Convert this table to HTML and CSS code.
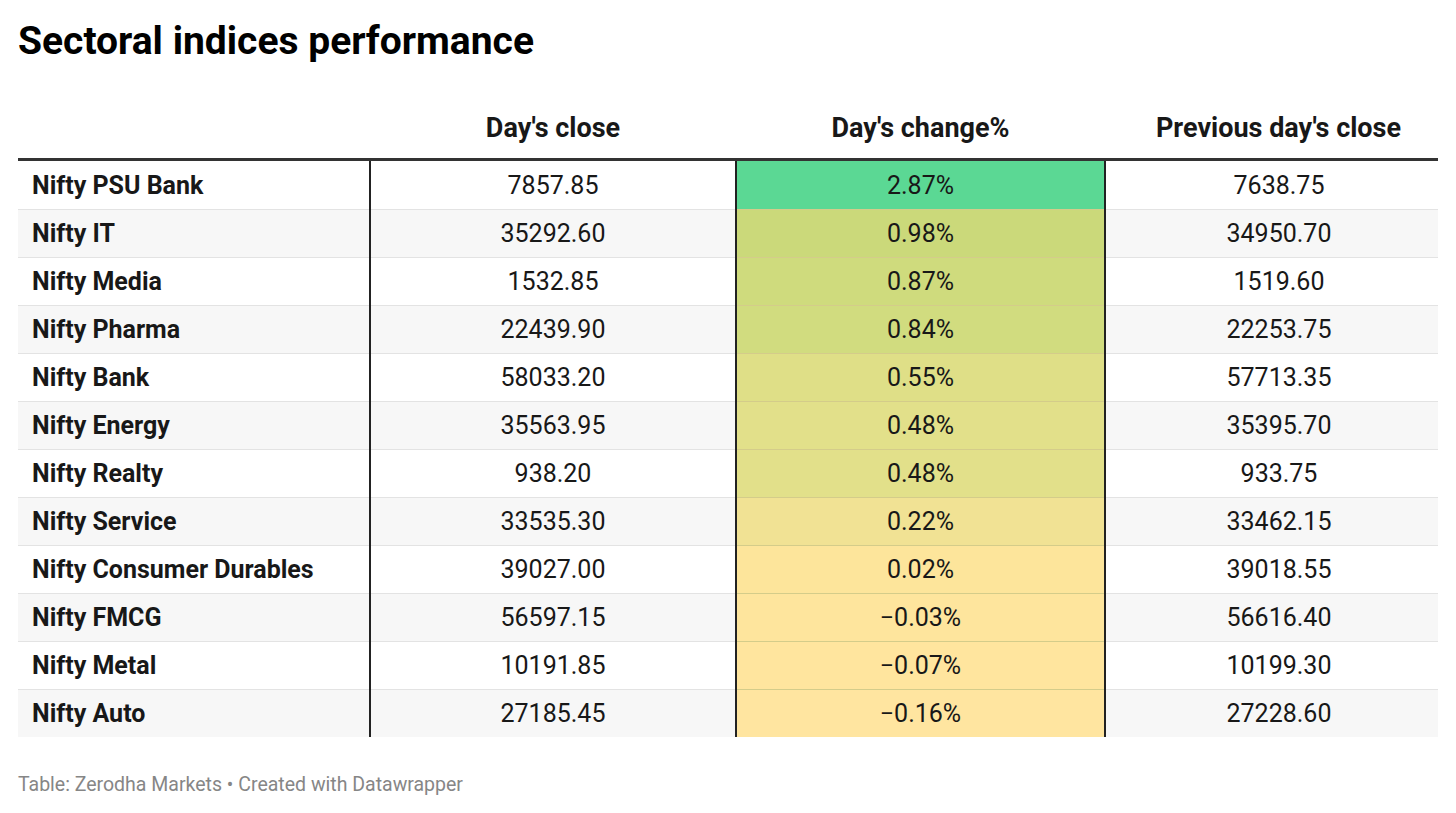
FILE: index.html
```html
<!DOCTYPE html>
<html>
<head>
<meta charset="utf-8">
<link rel="stylesheet" href="styles.css">
</head>
<body>
<div class="chart">
  <h1 class="title">Sectoral indices performance</h1>
  <table class="tbl">
    <colgroup>
      <col class="c1"><col class="c2"><col class="c3"><col class="c4">
    </colgroup>
    <thead>
      <tr><th></th><th>Day's close</th><th>Day's change%</th><th class="last">Previous day's close</th></tr>
    </thead>
    <tbody>
      <tr><td class="name">Nifty PSU Bank</td><td>7857.85</td><td class="chg" style="background:#5bd894">2.87%</td><td class="last">7638.75</td></tr>
      <tr><td class="name">Nifty IT</td><td>35292.60</td><td class="chg" style="background:#cbd97a">0.98%</td><td class="last">34950.70</td></tr>
      <tr><td class="name">Nifty Media</td><td>1532.85</td><td class="chg" style="background:#cfdb7d">0.87%</td><td class="last">1519.60</td></tr>
      <tr><td class="name">Nifty Pharma</td><td>22439.90</td><td class="chg" style="background:#d1dc7f">0.84%</td><td class="last">22253.75</td></tr>
      <tr><td class="name">Nifty Bank</td><td>58033.20</td><td class="chg" style="background:#dfdf87">0.55%</td><td class="last">57713.35</td></tr>
      <tr><td class="name">Nifty Energy</td><td>35563.95</td><td class="chg" style="background:#e2e08a">0.48%</td><td class="last">35395.70</td></tr>
      <tr><td class="name">Nifty Realty</td><td>938.20</td><td class="chg" style="background:#e2e08a">0.48%</td><td class="last">933.75</td></tr>
      <tr><td class="name">Nifty Service</td><td>33535.30</td><td class="chg" style="background:#f1e294">0.22%</td><td class="last">33462.15</td></tr>
      <tr><td class="name">Nifty Consumer Durables</td><td>39027.00</td><td class="chg" style="background:#fde59b">0.02%</td><td class="last">39018.55</td></tr>
      <tr><td class="name">Nifty FMCG</td><td>56597.15</td><td class="chg" style="background:#fee59d">−0.03%</td><td class="last">56616.40</td></tr>
      <tr><td class="name">Nifty Metal</td><td>10191.85</td><td class="chg" style="background:#ffe59e">−0.07%</td><td class="last">10199.30</td></tr>
      <tr><td class="name">Nifty Auto</td><td>27185.45</td><td class="chg" style="background:#ffe5a0">−0.16%</td><td class="last">27228.60</td></tr>
    </tbody>
  </table>
  <div class="footer">Table: Zerodha Markets • Created with Datawrapper</div>
</div>
</body>
</html>
```

FILE: styles.css
```css
html, body {
  margin: 0;
  padding: 0;
  background: #ffffff;
}
body {
  font-family: Roboto, "Liberation Sans", sans-serif;
  color: #181818;
}
.chart {
  padding: 18px 18px 0 18px;
}
.title {
  margin: 0;
  font-size: 39px;
  font-weight: 700;
  line-height: 46px;
  color: #000;
}
.tbl {
  margin-top: 48px;
  width: 1420px;
  border-collapse: collapse;
  table-layout: fixed;
  font-size: 25px;
}
.c1 { width: 352px; }
.c2 { width: 366px; }
.c3 { width: 369px; }
.c4 { width: 333px; }
.tbl th {
  font-size: 27px;
  font-weight: 700;
  line-height: 32px;
  padding: 0 0 14px 0;
  text-align: center;
  vertical-align: bottom;
  border-bottom: 3px solid #333;
  color: #181818;
}
.tbl td {
  height: 47px;
  padding: 0;
  text-align: center;
  vertical-align: middle;
  border-top: 1px solid #e3e3e3;
}
.tbl tbody tr:first-child td {
  border-top: none;
  height: 48px;
}
.tbl tbody tr:nth-child(even) td {
  background-color: #f7f7f7;
}
.tbl td.name {
  text-align: left;
  padding-left: 14px;
  font-weight: 700;
}
.tbl .last {
  padding-left: 14px;
}
.tbl td:nth-child(2),
.tbl td:nth-child(3) {
  border-left: 2px solid #222;
}
.tbl td:nth-child(3) {
  border-right: 2px solid #222;
}
.tbl td.chg {
  border-top-color: #d4cc8a;
}
.footer {
  margin-top: 36px;
  font-size: 19.5px;
  color: #868686;
}
```
